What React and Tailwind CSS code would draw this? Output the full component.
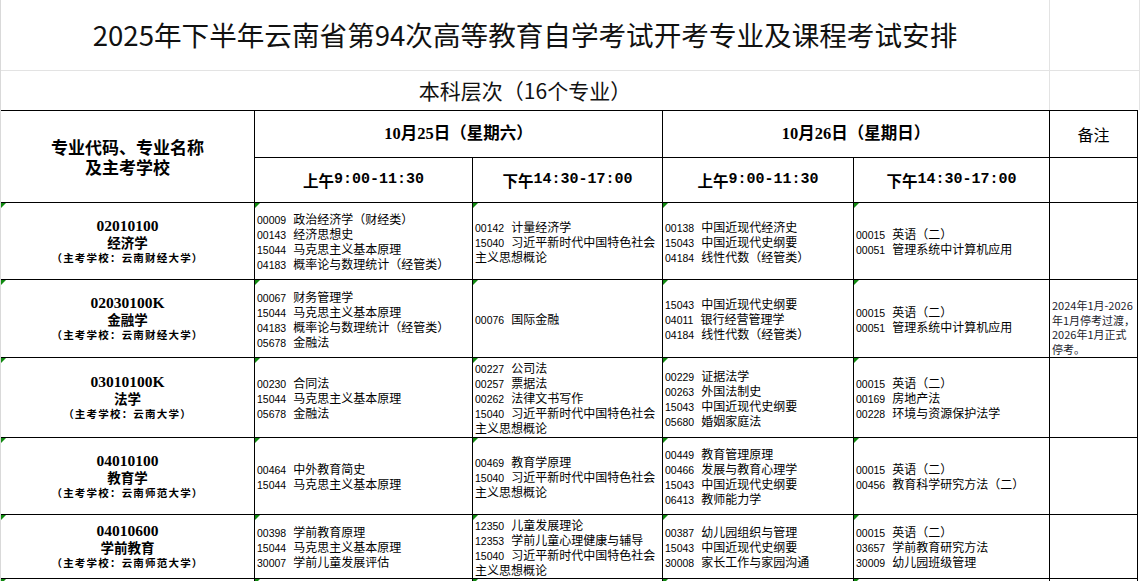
import React from "react";

const rows = [
  {
    code: "02010100",
    name: "经济学",
    school: "（主考学校：云南财经大学）",
    cells: [
      [["00009", "政治经济学（财经类）"], ["00143", "经济思想史"], ["15044", "马克思主义基本原理"], ["04183", "概率论与数理统计（经管类）"]],
      [["00142", "计量经济学"], ["15040", "习近平新时代中国特色社会主义思想概论"]],
      [["00138", "中国近现代经济史"], ["15043", "中国近现代史纲要"], ["04184", "线性代数（经管类）"]],
      [["00015", "英语（二）"], ["00051", "管理系统中计算机应用"]],
    ],
  },
  {
    code: "02030100K",
    name: "金融学",
    school: "（主考学校：云南财经大学）",
    cells: [
      [["00067", "财务管理学"], ["15044", "马克思主义基本原理"], ["04183", "概率论与数理统计（经管类）"], ["05678", "金融法"]],
      [["00076", "国际金融"]],
      [["15043", "中国近现代史纲要"], ["04011", "银行经营管理学"], ["04184", "线性代数（经管类）"]],
      [["00015", "英语（二）"], ["00051", "管理系统中计算机应用"]],
    ],
    note: ["2024年1月-2026", "年1月停考过渡，", "2026年1月正式", "停考。"],
  },
  {
    code: "03010100K",
    name: "法学",
    school: "（主考学校：云南大学）",
    cells: [
      [["00230", "合同法"], ["15044", "马克思主义基本原理"], ["05678", "金融法"]],
      [["00227", "公司法"], ["00257", "票据法"], ["00262", "法律文书写作"], ["15040", "习近平新时代中国特色社会主义思想概论"]],
      [["00229", "证据法学"], ["00263", "外国法制史"], ["15043", "中国近现代史纲要"], ["05680", "婚姻家庭法"]],
      [["00015", "英语（二）"], ["00169", "房地产法"], ["00228", "环境与资源保护法学"]],
    ],
  },
  {
    code: "04010100",
    name: "教育学",
    school: "（主考学校：云南师范大学）",
    cells: [
      [["00464", "中外教育简史"], ["15044", "马克思主义基本原理"]],
      [["00469", "教育学原理"], ["15040", "习近平新时代中国特色社会主义思想概论"]],
      [["00449", "教育管理原理"], ["00466", "发展与教育心理学"], ["15043", "中国近现代史纲要"], ["06413", "教师能力学"]],
      [["00015", "英语（二）"], ["00456", "教育科学研究方法（二）"]],
    ],
  },
  {
    code: "04010600",
    name: "学前教育",
    school: "（主考学校：云南师范大学）",
    cells: [
      [["00398", "学前教育原理"], ["15044", "马克思主义基本原理"], ["30007", "学前儿童发展评估"]],
      [["12350", "儿童发展理论"], ["12353", "学前儿童心理健康与辅导"], ["15040", "习近平新时代中国特色社会主义思想概论"]],
      [["00387", "幼儿园组织与管理"], ["15043", "中国近现代史纲要"], ["30008", "家长工作与家园沟通"]],
      [["00015", "英语（二）"], ["03657", "学前教育研究方法"], ["30009", "幼儿园班级管理"]],
    ],
  },
];

function Flag() {
  return (
    <span className="absolute left-0 top-0 h-0 w-0 border-t-[5px] border-r-[5px] border-t-[#108a10] border-r-transparent" />
  );
}

function Courses({ list }) {
  return (
    <div className="relative flex flex-col justify-center border-r border-b border-black pl-[2px] text-[12px] leading-[15px] text-black">
      <Flag />
      {list.map(([code, name], i) => (
        <div key={i}>
          <span className="mr-[7px] font-['Liberation_Sans',sans-serif] text-[10.5px] leading-[10px]">{code}</span>
          {name}
        </div>
      ))}
    </div>
  );
}

function TimeLabel({ cjk, time }) {
  return (
    <div className="flex items-center justify-center border-r border-b border-black font-bold leading-[20px]">
      <span className="text-[15.5px]">{cjk}</span>
      <span className="font-['Liberation_Mono',monospace] text-[15px]">{time}</span>
    </div>
  );
}

export default function App() {
  return (
    <div className="w-[1140px] bg-white border-l border-[#d9d9d9] font-['Noto_Sans_CJK_SC',sans-serif] text-black">
      {/* title rows */}
      <div className="flex">
        <div className="flex h-[71px] w-[1049px] items-center justify-center border-r border-b border-[#e3e3e3] text-[27.6px] text-[#111]">
          2025年下半年云南省第94次高等教育自学考试开考专业及课程考试安排
        </div>
        <div className="h-[71px] w-[90px] border-r border-b border-[#e3e3e3]" />
      </div>
      <div className="flex">
        <div className="flex h-[39px] w-[1049px] items-center justify-center border-r border-[#e3e3e3] text-[21px] text-[#111]">
          本科层次（16个专业）
        </div>
        <div className="h-[39px] w-[90px] border-r border-[#e3e3e3]" />
      </div>

      <div className="grid w-[1137px] grid-cols-[254px_218px_190px_191px_196px_88px] grid-rows-[47px_45px_77px_78px_80px_77px_64px_77px] border-t border-black">
        <div className="row-span-2 flex flex-col items-center justify-center border-r border-b border-black text-[17px] font-bold leading-[20px]">
          <div>专业代码、专业名称</div>
          <div>及主考学校</div>
        </div>
        <div className="col-span-2 flex items-center justify-center border-r border-b border-black font-['Liberation_Serif','Noto_Sans_CJK_SC',serif] text-[16.5px] font-bold">
          10月25日（星期六）
        </div>
        <div className="col-span-2 flex items-center justify-center border-r border-b border-black font-['Liberation_Serif','Noto_Sans_CJK_SC',serif] text-[16.5px] font-bold">
          10月26日（星期日）
        </div>
        <div className="flex items-center justify-center border-r border-b border-black text-[16px]">
          备注
        </div>
        <TimeLabel cjk="上午" time="9:00-11:30" />
        <TimeLabel cjk="下午" time="14:30-17:00" />
        <TimeLabel cjk="上午" time="9:00-11:30" />
        <TimeLabel cjk="下午" time="14:30-17:00" />
        <div className="border-r border-b border-black" />

        {rows.map((r) => (
          <React.Fragment key={r.code}>
            <div className="relative flex flex-col items-center justify-center border-r border-b border-black font-bold">
              <Flag />
              <div className="font-['Liberation_Serif',serif] text-[15.5px] leading-[16px]">{r.code}</div>
              <div className="text-[13.5px] leading-[16px]">{r.name}</div>
              <div className="text-[10.5px] leading-[15px] tracking-[1.2px]">{r.school}</div>
            </div>
            {r.cells.map((c, i) => (
              <Courses key={i} list={c} />
            ))}
            <div className="flex flex-col justify-end border-r border-b border-black pb-[1px] pl-[2px] text-[11px] leading-[14.5px] text-[#1c1c2c]">
              {r.note &&
                r.note.map((l, i) => (
                  <div key={i} className="whitespace-nowrap">
                    {l}
                  </div>
                ))}
            </div>
          </React.Fragment>
        ))}

        {[0, 1, 2, 3, 4].map((i) => (
          <div key={i} className="relative border-r border-b border-black">
            <Flag />
          </div>
        ))}
        <div className="border-r border-b border-black" />
      </div>
    </div>
  );
}
